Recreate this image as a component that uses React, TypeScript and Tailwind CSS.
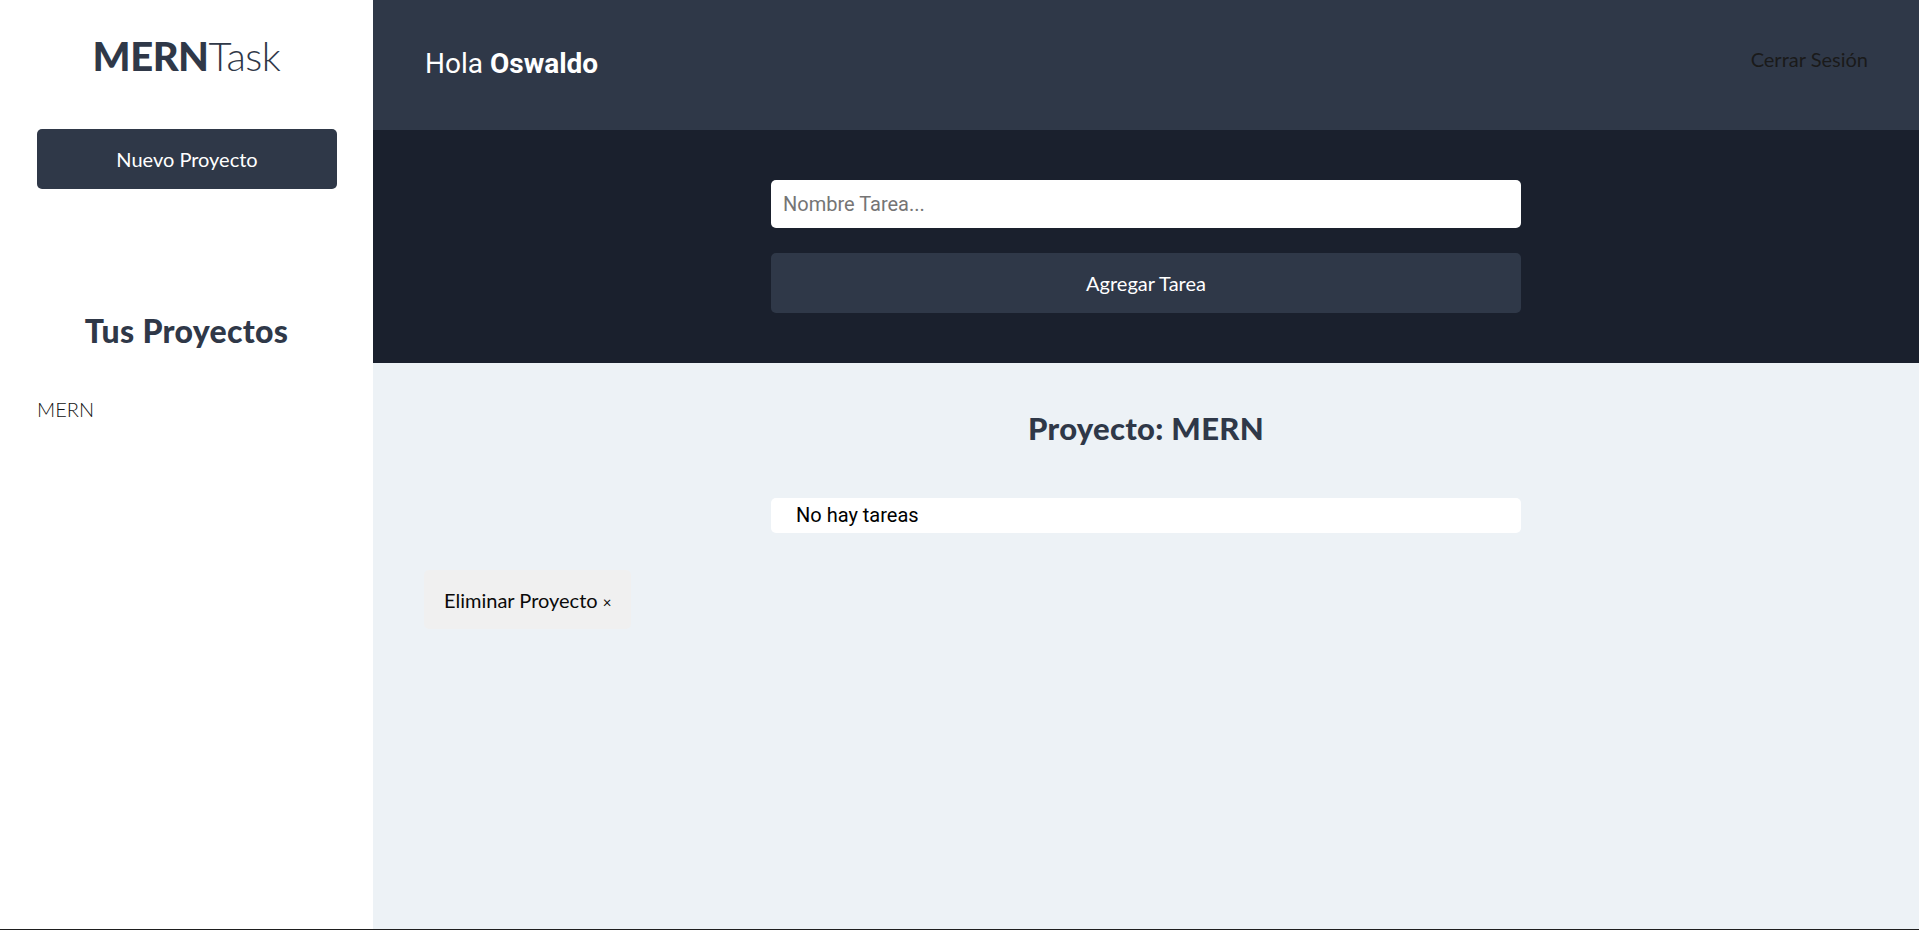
import React from 'react';

const raleway = { fontFamily: 'Lato, "Open Sans", sans-serif' };
const roboto = { fontFamily: 'Roboto, sans-serif' };

const Sidebar: React.FC = () => (
  <aside className="w-[373px] shrink-0 bg-white flex flex-col px-[37px]" style={raleway}>
    <h1 className="mt-[34px] text-center text-[40px] leading-[44px] text-[#2f3848] tracking-[-0.5px]">
      <span className="font-black">MERN</span>
      <span className="font-light">Task</span>
    </h1>
    <button className="mt-[51px] h-[60px] w-[300px] rounded-[5px] bg-[#2f3848] text-[20px] text-white">
      Nuevo Proyecto
    </button>
    <h2 className="mt-[123px] text-center text-[32px] font-black leading-[38px] text-[#2f3848] tracking-[0.3px]">
      Tus Proyectos
    </h2>
    <ul className="mt-[44px]">
      <li className="text-[20px] font-light text-[#111]">MERN</li>
    </ul>
  </aside>
);

export default function App() {
  return (
    <div className="flex h-[930px] w-full overflow-hidden border-b border-[#1e1e1e]">
      <Sidebar />
      <section className="flex-1 flex flex-col bg-[#edf2f6]">
        <div className="h-[130px] shrink-0 bg-[#2f3848] flex items-center justify-between pl-[52px] pr-[51px]">
          <p className="-mt-[2px] text-[28px] text-white" style={roboto}>
            Hola <span className="font-bold">Oswaldo</span>
          </p>
          <a className="-mt-[13px] text-[20px] text-[#1a1a1a]" style={raleway}>
            Cerrar Sesión
          </a>
        </div>
        <div className="h-[233px] shrink-0 bg-[#1a202d] pt-[50px] flex flex-col items-center">
          <input
            type="text"
            placeholder="Nombre Tarea..."
            className="block h-[48px] w-[750px] rounded-[5px] bg-white px-[12px] text-[20px] text-[#333] placeholder:text-[#757575] outline-none"
            style={roboto}
          />
          <button
            className="mt-[25px] h-[60px] w-[750px] rounded-[5px] bg-[#2f3848] text-[20px] text-white"
            style={raleway}
          >
            Agregar Tarea
          </button>
        </div>
        <div className="flex-1 px-[51px] pt-[47px]">
          <h2 className="text-center text-[31px] font-black leading-[36px] text-[#2f3848] tracking-[0.3px]" style={raleway}>
            Proyecto: MERN
          </h2>
          <ul className="mt-[52px] mx-auto w-[750px]">
            <li
              className="h-[35px] rounded-[5px] bg-white pl-[25px] text-[20px] leading-[35px] text-black"
              style={roboto}
            >
              No hay tareas
            </li>
          </ul>
          <button
            className="mt-[37px] h-[59px] rounded-[5px] bg-[#f0f0f0] px-[20px] text-[20px] text-[#0a0a0a]"
            style={raleway}
          >
            Eliminar Proyecto <span className="text-[15px]">&times;</span>
          </button>
        </div>
      </section>
    </div>
  );
}
